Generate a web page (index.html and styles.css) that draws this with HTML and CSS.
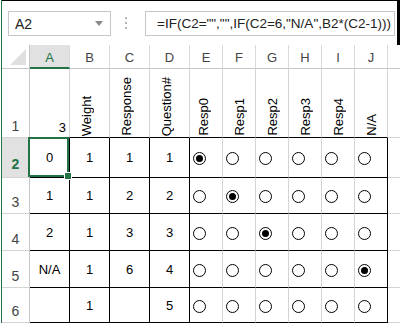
FILE: index.html
```html
<!DOCTYPE html>
<html lang="en">
<head>
  <meta charset="UTF-8">
  <title>Survey sheet</title>
  <link rel="stylesheet" href="styles.css">
</head>
<body>
  <div class="app">
    <div class="formula-bar">
      <div class="name-box">
        <span>A2</span>
        <svg class="caret" width="8" height="5" viewBox="0 0 8 5"><path d="M0 0h8L4 5z" fill="#8a8a8a"/></svg>
      </div>
      <div class="grip">
        <svg width="3" height="13" viewBox="0 0 3 13"><rect x="0" y="0" width="2" height="2" fill="#b4b4b4"/><rect x="0" y="5" width="2" height="2" fill="#b4b4b4"/><rect x="0" y="10" width="2" height="2" fill="#b4b4b4"/></svg>
      </div>
      <div class="formula">=IF(C2="","",IF(C2=6,"N/A",B2*(C2-1)))</div>
    </div>

    <div class="sheet">
      <!-- column headings -->
      <div class="corner">
        <svg width="16" height="16" viewBox="0 0 16 16"><path d="M16 0V16H0z" fill="#dfdfdf"/></svg>
      </div>
      <div class="ch sel">A</div>
      <div class="ch">B</div>
      <div class="ch">C</div>
      <div class="ch">D</div>
      <div class="ch">E</div>
      <div class="ch">F</div>
      <div class="ch">G</div>
      <div class="ch">H</div>
      <div class="ch">I</div>
      <div class="ch">J</div>
      <div class="ch last"></div>

      <!-- row 1 -->
      <div class="rh">1</div>
      <div class="c r1 num">3</div>
      <div class="c r1 v left"><span>Weight</span></div>
      <div class="c r1 v left"><span>Response</span></div>
      <div class="c r1 v left"><span>Question#</span></div>
      <div class="c r1 v left"><span>Resp0</span></div>
      <div class="c r1 v"><span>Resp1</span></div>
      <div class="c r1 v"><span>Resp2</span></div>
      <div class="c r1 v"><span>Resp3</span></div>
      <div class="c r1 v"><span>Resp4</span></div>
      <div class="c r1 v"><span>N/A</span></div>
      <div class="c last"></div>

      <!-- row 2 -->
      <div class="rh sel">2</div>
      <div class="c d bk active">0</div>
      <div class="c d bk">1</div>
      <div class="c d bk">1</div>
      <div class="c d bk">1</div>
      <div class="c d opt"><span class="radio on"></span></div>
      <div class="c d opt"><span class="radio"></span></div>
      <div class="c d opt"><span class="radio"></span></div>
      <div class="c d opt"><span class="radio"></span></div>
      <div class="c d opt"><span class="radio"></span></div>
      <div class="c d opt bk"><span class="radio"></span></div>
      <div class="c last"></div>

      <!-- row 3 -->
      <div class="rh">3</div>
      <div class="c d bk">1</div>
      <div class="c d bk">1</div>
      <div class="c d bk">2</div>
      <div class="c d bk">2</div>
      <div class="c d opt"><span class="radio"></span></div>
      <div class="c d opt"><span class="radio on"></span></div>
      <div class="c d opt"><span class="radio"></span></div>
      <div class="c d opt"><span class="radio"></span></div>
      <div class="c d opt"><span class="radio"></span></div>
      <div class="c d opt bk"><span class="radio"></span></div>
      <div class="c last"></div>

      <!-- row 4 -->
      <div class="rh">4</div>
      <div class="c d bk">2</div>
      <div class="c d bk">1</div>
      <div class="c d bk">3</div>
      <div class="c d bk">3</div>
      <div class="c d opt"><span class="radio"></span></div>
      <div class="c d opt"><span class="radio"></span></div>
      <div class="c d opt"><span class="radio on"></span></div>
      <div class="c d opt"><span class="radio"></span></div>
      <div class="c d opt"><span class="radio"></span></div>
      <div class="c d opt bk"><span class="radio"></span></div>
      <div class="c last"></div>

      <!-- row 5 -->
      <div class="rh">5</div>
      <div class="c d bk">N/A</div>
      <div class="c d bk">1</div>
      <div class="c d bk">6</div>
      <div class="c d bk">4</div>
      <div class="c d opt"><span class="radio"></span></div>
      <div class="c d opt"><span class="radio"></span></div>
      <div class="c d opt"><span class="radio"></span></div>
      <div class="c d opt"><span class="radio"></span></div>
      <div class="c d opt"><span class="radio"></span></div>
      <div class="c d opt bk"><span class="radio on"></span></div>
      <div class="c last"></div>

      <!-- row 6 -->
      <div class="rh">6</div>
      <div class="c d bk"></div>
      <div class="c d bk">1</div>
      <div class="c d bk"></div>
      <div class="c d bk">5</div>
      <div class="c d opt"><span class="radio"></span></div>
      <div class="c d opt"><span class="radio"></span></div>
      <div class="c d opt"><span class="radio"></span></div>
      <div class="c d opt"><span class="radio"></span></div>
      <div class="c d opt"><span class="radio"></span></div>
      <div class="c d opt bk"><span class="radio"></span></div>
      <div class="c last"></div>
    </div>
  </div>
</body>
</html>
```

FILE: styles.css
```css
* {
  box-sizing: border-box;
}
body {
  margin: 0;
  padding-left: 1px;
  background: #fff;
  font-family: "Liberation Sans", Arial, sans-serif;
  overflow: hidden;
}
.app {
  width: 399px;
  height: 323px;
  border-left: 1px solid #217346;
  overflow: hidden;
}

/* formula bar */
.formula-bar {
  height: 45px;
  display: flex;
  align-items: flex-start;
  padding: 10px 2px 0 6px;
  border-top: 1px solid #000;
  border-right: 3px solid #000;
}
.name-box {
  width: 103px;
  height: 25px;
  display: flex;
  align-items: center;
  justify-content: space-between;
  padding: 0 7px 0 6px;
  border: 1px solid #c6c6c6;
  font-size: 14px;
  color: #222;
}
.grip {
  width: 34px;
  height: 25px;
  display: flex;
  align-items: center;
  justify-content: center;
  padding-right: 4px;
}
.formula {
  flex: 1;
  height: 25px;
  line-height: 23px;
  padding-left: 11px;
  border: 1px solid #c6c6c6;
  font-size: 13.5px;
  color: #222;
  white-space: nowrap;
  overflow: hidden;
}

/* grid */
.sheet {
  display: grid;
  grid-template-columns: 28px repeat(4, 40px) repeat(6, 33px) 1fr;
  grid-template-rows: 24px 69px 40px 36px 37px 37px 35px;
}
.corner {
  display: flex;
  align-items: flex-end;
  justify-content: flex-end;
  padding: 0 3px 3px 0;
  border-right: 1px solid #c6c6c6;
  border-bottom: 1px solid #c6c6c6;
}
.ch {
  display: flex;
  align-items: center;
  justify-content: center;
  padding-top: 2px;
  font-size: 13px;
  color: #444;
  border-right: 1px solid #dadada;
  border-bottom: 1px solid #c6c6c6;
}
.ch.sel {
  background: #e1e1e1;
  color: #217346;
  border-bottom: 2px solid #217346;
}
.ch.last {
  border-right: none;
}
.rh {
  display: flex;
  align-items: flex-end;
  justify-content: center;
  padding-bottom: 3px;
  font-size: 14px;
  color: #444;
  border-right: 1px solid #c6c6c6;
  border-bottom: 1px solid #d4d4d4;
}
.rh.sel {
  background: #e1e1e1;
  color: #217346;
  font-weight: bold;
  padding-bottom: 5px;
}

.c {
  display: flex;
  align-items: center;
  justify-content: center;
  font-size: 13px;
  color: #000;
  border-right: 1px solid #d4d4d4;
  border-bottom: 1px solid #d4d4d4;
}
.c.last {
  border-right: none;
}
.c.r1 {
  border-bottom-color: #000;
}
.c.num {
  justify-content: flex-end;
  align-items: flex-end;
  padding: 0 3px 2px 0;
}
.c.v {
  align-items: flex-end;
  padding-bottom: 1px;
}
.c.v.left {
  padding-right: 6px;
}
.c.v span {
  writing-mode: vertical-rl;
  transform: rotate(180deg);
  line-height: 13px;
}
.c.d {
  border-bottom-color: #000;
}
.c.bk {
  border-right-color: #000;
}
.c.opt {
  justify-content: flex-start;
  padding-left: 3px;
  padding-top: 2px;
}
.c.active {
  position: relative;
}
.c.active::after {
  content: "";
  position: absolute;
  left: -2px;
  top: -1px;
  right: 0;
  bottom: 0;
  border: 2px solid #217346;
}
.c.active::before {
  content: "";
  position: absolute;
  right: -3px;
  bottom: -3px;
  width: 6px;
  height: 6px;
  background: #217346;
  border: 1px solid #fff;
  z-index: 1;
}

.radio {
  width: 13px;
  height: 13px;
  display: flex;
  align-items: center;
  justify-content: center;
  border: 1px solid #000;
  border-radius: 50%;
  background: #fff;
}
.radio.on::after {
  content: "";
  width: 7px;
  height: 7px;
  border-radius: 50%;
  background: #000;
}
```
